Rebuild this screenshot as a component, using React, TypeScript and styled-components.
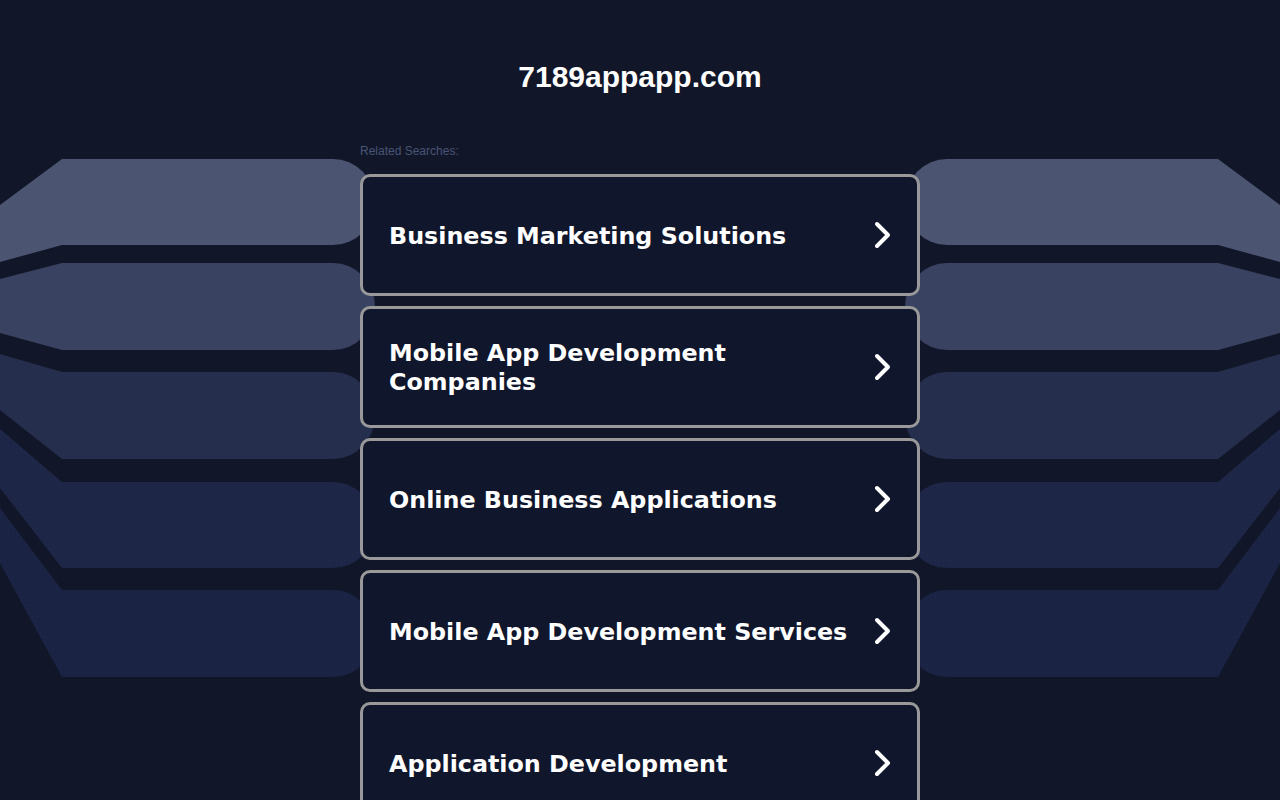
import * as React from 'react'
import styled, { createGlobalStyle } from 'styled-components'

const searches = [
    'Business Marketing Solutions',
    'Mobile App Development Companies',
    'Online Business Applications',
    'Mobile App Development Services',
    'Application Development',
]

interface Band {
    topL: number
    top: number
    bot: number
    botL: number
    color: string
    dotted?: boolean
}

const bands: Band[] = [
    { topL: 205, top: 159, bot: 245, botL: 262, color: '#4b5572' },
    { topL: 279, top: 263, bot: 350, botL: 333, color: '#394261' },
    { topL: 354, top: 372, bot: 459, botL: 410, color: '#262e4d' },
    { topL: 429, top: 482, bot: 568, botL: 488, color: '#1e2647', dotted: true },
    { topL: 508, top: 590, bot: 677, botL: 563, color: '#1b2345', dotted: true },
]

const bandPath = (b: Band) =>
    `M0 ${b.topL} L62 ${b.top} L333 ${b.top} A42 ${(b.bot - b.top) / 2} 0 0 1 333 ${b.bot} L62 ${b.bot} L0 ${b.botL} Z`

const Bands = () => (
    <>
        {bands.map((b, i) => (
            <React.Fragment key={i}>
                <path d={bandPath(b)} fill={b.color} />
                {b.dotted && <path d={bandPath(b)} fill="url(#dots)" />}
            </React.Fragment>
        ))}
    </>
)

const Backdrop = () => (
    <BackdropSvg width="1280" height="800" viewBox="0 0 1280 800" aria-hidden>
        <defs>
            <pattern id="dots" width="4" height="4" patternUnits="userSpaceOnUse">
                <circle cx="1" cy="1" r="0.5" fill="rgba(120,140,200,0.09)" />
            </pattern>
        </defs>
        <Bands />
        <g transform="translate(1280 0) scale(-1 1)">
            <Bands />
        </g>
    </BackdropSvg>
)

const Chevron = () => (
    <ChevronSvg viewBox="0 0 20 28" width="20" height="28">
        <polyline
            points="5,3 16,14 5,25"
            fill="none"
            stroke="#fff"
            strokeWidth="4"
            strokeLinecap="round"
            strokeLinejoin="round"
        />
    </ChevronSvg>
)

export default function App() {
    return (
        <>
            <GlobalStyle />
            <Page>
                <Backdrop />
                <Content>
                    <Title>7189appapp.com</Title>
                    <Label>Related Searches:</Label>
                    <List>
                        {searches.map((s) => (
                            <Card key={s} href="#">
                                <CardText>{s}</CardText>
                                <Chevron />
                            </Card>
                        ))}
                    </List>
                </Content>
            </Page>
        </>
    )
}

const GlobalStyle = createGlobalStyle`
    html, body {
        margin: 0;
        padding: 0;
        background: #111729;
        overflow: hidden;
    }
    * {
        box-sizing: border-box;
    }
`

const Page = styled.div`
    position: relative;
    width: 100%;
    height: 100vh;
    overflow: hidden;
    background: #111729;
    font-family: 'Liberation Sans', Arial, sans-serif;
`

const BackdropSvg = styled.svg`
    position: absolute;
    left: 0;
    top: 0;
    pointer-events: none;
`

const Content = styled.main`
    position: relative;
    z-index: 1;
    width: 560px;
    margin: 0 auto;
    padding-top: 59px;
`

const Title = styled.h1`
    margin: 0;
    text-align: center;
    font-size: 30px;
    line-height: 36px;
    font-weight: 700;
    color: #fff;
`

const Label = styled.div`
    margin-top: 49px;
    font-size: 12px;
    line-height: 14px;
    color: #4a5475;
`

const List = styled.div`
    display: flex;
    flex-direction: column;
    gap: 10px;
    margin-top: 16px;
`

const Card = styled.a`
    display: flex;
    align-items: center;
    gap: 10px;
    height: 122px;
    padding: 0 25px 0 26px;
    border: 3px solid #999;
    border-radius: 10px;
    background: #10162b;
    text-decoration: none;
`

const CardText = styled.span`
    flex: 1;
    padding-top: 2px;
    font-family: 'DejaVu Sans', Verdana, sans-serif;
    font-size: 23.8px;
    line-height: 29px;
    font-weight: 700;
    color: #fff;
`

const ChevronSvg = styled.svg`
    flex: none;
`
